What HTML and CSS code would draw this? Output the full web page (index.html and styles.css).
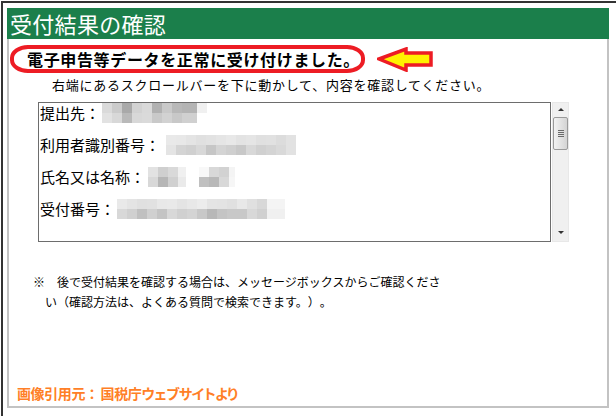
FILE: index.html
```html
<!DOCTYPE html>
<html lang="ja">
<head>
  <meta charset="UTF-8" />
  <title>受付結果の確認</title>
  <link rel="stylesheet" href="styles.css">
</head>
<body>
  <div class="frame">
    <div class="panel">
      <div class="panel-title">受付結果の確認</div>
      <div class="panel-body">
        <div class="notice-row">
          <div class="notice">電子申告等データを正常に受け付けました。</div>
          <svg class="arrow" width="57" height="25" viewBox="0 0 57 25">
            <path d="M2,12 L29,2 L29,6 L54,6 L54,18 L29,18 L29,23 Z" fill="#fff200" stroke="#ed1c24" stroke-width="3.5" stroke-linejoin="miter"/>
          </svg>
        </div>
        <div class="hint">右端にあるスクロールバーを下に動かして、内容を確認してください。</div>

        <div class="result-box">
          <div class="result-text">
            <div class="result-line">提出先：<span class="mosaic m-office"></span></div>
            <div class="result-line">利用者識別番号：<span class="mosaic m-userid"></span></div>
            <div class="result-line">氏名又は名称：<span class="mosaic m-name1"></span><span class="mosaic m-name2"></span></div>
            <div class="result-line">受付番号：<span class="mosaic m-number"></span></div>
          </div>
          <div class="scrollbar">
            <div class="scroll-up"></div>
            <div class="scroll-thumb"><span></span><span></span><span></span><span></span></div>
            <div class="scroll-down"></div>
          </div>
        </div>

        <p class="note">※　後で受付結果を確認する場合は、メッセージボックスからご確認ください（確認方法は、よくある質問で検索できます。）。</p>

        <div class="source">画像引用元：<span class="source-site">国税庁ウェブサイトより</span></div>
      </div>
    </div>
  </div>
</body>
</html>
```

FILE: styles.css
```css
body {
  margin: 0;
  background-color: #ffffff;
  color: #000000;
  font-family: "Noto Sans CJK JP", "DejaVu Sans", sans-serif;
  text-spacing-trim: space-all;
}

.frame {
  margin: 1px;
  width: 610px;
  height: 410px;
  border: 2px solid #333333;
  padding: 5px 4px 5px 4px;
  box-sizing: content-box;
}

.frame * {
  box-sizing: border-box;
}

.panel {
  width: 602px;
  height: 400px;
  display: flex;
  flex-direction: column;
}

.panel-title {
  height: 31px;
  background-color: #1b7f4b;
  color: #ffffff;
  font-size: 22px;
  line-height: 31px;
  padding-left: 3px;
  letter-spacing: 0.3px;
}

.panel-body {
  flex: 1;
  display: flex;
  flex-direction: column;
  border: 2px solid #c3c3c3;
  border-top: none;
}

.notice-row {
  display: flex;
  align-items: center;
  margin: 6px 0 0 1px;
}

.notice {
  height: 28px;
  border: 4px solid #ed1c24;
  border-radius: 18px / 13px;
  padding: 0 1px 0 13px;
  font-size: 16px;
  font-weight: 700;
  line-height: 20px;
  letter-spacing: 0.65px;
  white-space: nowrap;
}

.arrow {
  margin-left: 12px;
}

.hint {
  margin-top: 4px;
  padding-left: 43px;
  font-size: 13px;
  line-height: 16px;
  letter-spacing: 0.75px;
}

.result-box {
  display: flex;
  margin: 9px 0 0 29px;
  height: 140px;
}

.result-text {
  width: 513px;
  border: 1px solid #6d6d6d;
  padding: 0 0 0 1px;
  font-size: 15px;
  line-height: 20px;
}

.result-line {
  display: flex;
  align-items: center;
  margin-bottom: 12px;
  white-space: nowrap;
}

.mosaic {
  display: inline-block;
  height: 20px;
  margin-left: 2px;
  background-repeat: no-repeat;
  background-size: 100% 10px;
  background-position: left top, left bottom;
}

.m-office {
  width: 105px;
  background-image:
    linear-gradient(90deg, #dadada 0 10px, #cbcbcb 10px 20px, #a9a9a9 20px 30px, #d2d2d2 30px 40px, #d9d9d9 40px 50px, #b1b1b1 50px 60px, #c9c9c9 60px 70px, #b8b8b8 70px 80px, #b4b4b4 80px 95px, #f0f0f0 95px),
    linear-gradient(90deg, #e2e2e2 0 10px, #d8d8d8 10px 20px, #b9b9b9 20px 30px, #d8d8d8 30px 40px, #dadada 40px 50px, #c9c9c9 50px 60px, #d2d2d2 60px 70px, #c8c8c8 70px 80px, #d0d0d0 80px 95px, #ffffff 95px);
}

.m-userid {
  width: 130px;
  margin-left: 6px;
  background-image:
    linear-gradient(90deg, #e9e9e9 0 10px, #e8e8e8 10px 20px, #e4e4e4 20px 30px, #e0e0e0 30px 40px, #e2e2e2 40px 50px, #e5e5e5 50px 60px, #e8e8e8 60px 70px, #e3e3e3 70px 80px, #e5e5e5 80px 90px, #e0e0e0 90px 100px, #e1e1e1 100px 110px, #dcdcdc 110px 120px, #e2e2e2 120px),
    linear-gradient(90deg, #e4e4e4 0 10px, #d4d4d4 10px 20px, #d0d0d0 20px 30px, #d8d8d8 30px 40px, #c6c6c6 40px 50px, #d4d4d4 50px 60px, #cfcfcf 60px 70px, #c8c8c8 70px 80px, #d8d8d8 80px 90px, #d0d0d0 90px 100px, #d4d4d4 100px 110px, #d9d9d9 110px 120px, #e2e2e2 120px);
}

.m-name1 {
  width: 38px;
  margin-left: 3px;
  background-image:
    linear-gradient(90deg, #e2e2e2 0 10px, #cfcfcf 10px 20px, #d9d9d9 20px 30px, #f0f0f0 30px),
    linear-gradient(90deg, #d8d8d8 0 10px, #b6b6b6 10px 20px, #d0d0d0 20px 30px, #eaeaea 30px);
}

.m-name2 {
  width: 36px;
  margin-left: 13px;
  background-image:
    linear-gradient(90deg, #f8f8f8 0 10px, #d8d8d8 10px 20px, #d2d2d2 20px 30px, #f4f4f4 30px),
    linear-gradient(90deg, #c0c0c0 0 10px, #b8b8b8 10px 20px, #d8d8d8 20px 30px, #f6f6f6 30px);
}

.m-number {
  width: 168px;
  background-image:
    linear-gradient(90deg, #e9e9e9 0 10px, #e4e4e4 10px 20px, #e0e0e0 20px 30px, #e1e1e1 30px 40px, #e8e8e8 40px 50px, #e9e9e9 50px 60px, #e4e4e4 60px 70px, #e8e8e8 70px 80px, #ececec 80px 90px, #e4e4e4 90px 100px, #e3e3e3 100px 110px, #e0e0e0 110px 120px, #e8e8e8 120px 130px, #e0e0e0 130px 140px, #d8d8d8 140px 150px, #f4f4f4 150px),
    linear-gradient(90deg, #d8d8d8 0 10px, #d0d0d0 10px 20px, #c0c0c0 20px 30px, #d0d0d0 30px 40px, #c4c4c4 40px 50px, #d8d8d8 50px 60px, #d0d0d0 60px 70px, #d4d4d4 70px 80px, #c8c8c8 80px 90px, #b8b8b8 90px 100px, #c4c4c4 100px 110px, #c8c8c8 110px 120px, #c8c8c8 120px 130px, #d8d8d8 130px 140px, #d0d0d0 140px 150px, #f0f0f0 150px);
}

.scrollbar {
  width: 17px;
  margin-left: 1px;
  background-color: #f0f0f0;
  border: 1px solid #e8e8e8;
  display: flex;
  flex-direction: column;
  align-items: center;
}

.scroll-up,
.scroll-down {
  width: 0;
  height: 0;
  border-left: 3px solid transparent;
  border-right: 3px solid transparent;
}

.scroll-up {
  margin-top: 5px;
  border-bottom: 3px solid #333333;
}

.scroll-thumb {
  width: 15px;
  height: 33px;
  margin-top: 6px;
  border: 1px solid #9a9a9a;
  border-radius: 2px;
  background: linear-gradient(90deg, #f2f2f2, #e0e0e0 60%, #d4d4d4);
  display: flex;
  flex-direction: column;
  align-items: center;
  justify-content: center;
  gap: 1px;
}

.scroll-thumb span {
  width: 6px;
  height: 1px;
  background-color: #6a6a6a;
}

.scroll-down {
  margin-top: auto;
  margin-bottom: 7px;
  border-top: 3px solid #333333;
}

.note {
  margin: 30px 0 0 0;
  width: 436px;
  padding-left: 36px;
  text-indent: -12px;
  font-size: 12px;
  line-height: 20px;
}

.source {
  margin-top: auto;
  margin-bottom: 4px;
  padding-left: 8px;
  color: #ff7f27;
  font-size: 14px;
  font-weight: 700;
  line-height: 18px;
  letter-spacing: -0.4px;
}

.source-site {
  margin-left: 2px;
  font-feature-settings: "palt";
}
```
